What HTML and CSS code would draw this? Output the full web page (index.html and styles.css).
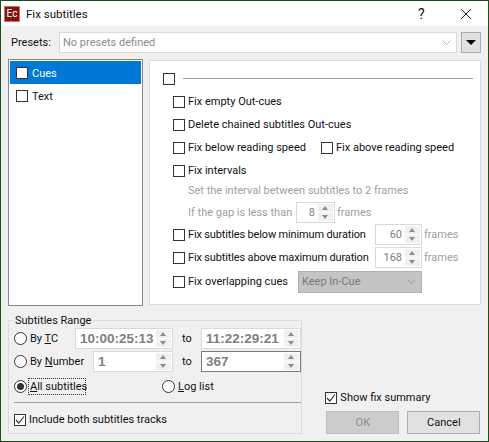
FILE: index.html
```html
<!DOCTYPE html>
<html>

<head>
    <title>Fix subtitles</title>
    <link rel="stylesheet" href="styles.css">
</head>

<body>
    <div class="window">
        <!-- Title bar -->
        <div class="titlebar">
            <div class="appIcon">Ec</div>
            <div class="titleText">Fix subtitles</div>
            <div class="helpBtn">?</div>
            <svg class="closeBtn" width="12" height="12" viewBox="0 0 12 12">
                <path d="M1 1 L11 11 M11 1 L1 11" stroke="#222" stroke-width="1" fill="none"/>
            </svg>
        </div>

        <div class="content">
            <!-- Presets -->
            <div class="presets">
                <label class="presetsLabel">Presets:</label>
                <div class="presetsCombo">
                    <span>No presets defined</span>
                    <svg width="9" height="5" viewBox="0 0 9 5"><path d="M0.5 0.5 L4.5 4.5 L8.5 0.5" stroke="#bbb" fill="none"/></svg>
                </div>
                <div class="presetsMenu"><span class="blackArrow"></span></div>
            </div>

            <div class="main">
                <div class="sideList">
                    <div class="sideItem selected"><span class="check"></span><span class="sideText">Cues</span></div>
                    <div class="sideItem"><span class="check"></span><span class="sideText">Text</span></div>
                </div>

                <div class="panel">
                    <div class="panelHead">
                        <span class="check"></span>
                        <div class="headLine"></div>
                    </div>
                    <div class="row"><span class="check"></span>Fix empty Out-cues</div>
                    <div class="row"><span class="check"></span>Delete chained subtitles Out-cues</div>
                    <div class="row">
                        <span class="check"></span><span class="speedLabel">Fix below reading speed</span>
                        <span class="check"></span><span>Fix above reading speed</span>
                    </div>
                    <div class="row"><span class="check"></span>Fix intervals</div>
                    <div class="row note">Set the interval between subtitles to 2 frames</div>
                    <div class="row note gapRow">
                        <span class="gapLabel">If the gap is less than</span>
                        <div class="spin smallSpin"><span class="spinValue">8</span><div class="arrows"><i class="up"></i><i class="down"></i></div></div>
                        <span>frames</span>
                    </div>
                    <div class="row">
                        <span class="check"></span><span class="durLabel">Fix subtitles below minimum duration</span>
                        <div class="spin durSpin"><span class="spinValue">60</span><div class="arrows"><i class="up"></i><i class="down"></i></div></div>
                        <span class="unit">frames</span>
                    </div>
                    <div class="row">
                        <span class="check"></span><span class="durLabel">Fix subtitles above maximum duration</span>
                        <div class="spin durSpin"><span class="spinValue">168</span><div class="arrows"><i class="up"></i><i class="down"></i></div></div>
                        <span class="unit">frames</span>
                    </div>
                    <div class="row overlapRow">
                        <span class="check"></span><span class="overlapLabel">Fix overlapping cues</span>
                        <div class="keepCombo">
                            <span>Keep In-Cue</span>
                            <svg width="9" height="5" viewBox="0 0 9 5"><path d="M0.5 0.5 L4.5 4.5 L8.5 0.5" stroke="#999" fill="none"/></svg>
                        </div>
                    </div>
                </div>
            </div>

            <div class="bottom">
                <fieldset class="range">
                    <legend>Subtitles Range</legend>
                    <div class="rangeRow">
                        <span class="radio"></span><span class="tcLabel">By <u>T</u>C</span>
                        <div class="spin fromSpin"><span class="spinBold">10:00:25:13</span><div class="arrows"><i class="up"></i><i class="down"></i></div></div>
                        <span class="toLabel">to</span>
                        <div class="spin tcSpin"><span class="spinBold">11:22:29:21</span><div class="arrows"><i class="up"></i><i class="down"></i></div></div>
                    </div>
                    <div class="rangeRow">
                        <span class="radio"></span><span class="numLabel">By <u>N</u>umber</span>
                        <div class="spin numSpin"><span class="spinBold">1</span><div class="arrows"><i class="up"></i><i class="down"></i></div></div>
                        <span class="toLabel">to</span>
                        <div class="spin tcSpin focused"><span class="spinBold">367</span><div class="arrows"><i class="up"></i><i class="down"></i></div></div>
                    </div>
                    <div class="rangeRow allRow">
                        <span class="radio on"></span><span class="allLabel"><u>A</u>ll subtitles</span>
                        <span class="radio"></span><span><u>L</u>og list</span>
                    </div>
                    <div class="rangeLine"></div>
                    <div class="rangeRow">
                        <span class="check checked"><svg width="12" height="12" viewBox="0 0 12 12"><path d="M2 6 L4.8 9 L10 2.5" stroke="#333" stroke-width="1.2" fill="none"/></svg></span><span>Include both subtitles tracks</span>
                    </div>
                </fieldset>

                <div class="actions">
                    <div class="summary">
                        <span class="check checked"><svg width="12" height="12" viewBox="0 0 12 12"><path d="M2 6 L4.8 9 L10 2.5" stroke="#333" stroke-width="1.2" fill="none"/></svg></span><span>Show fix summary</span>
                    </div>
                    <div class="buttons">
                        <div class="btn disabled">OK</div>
                        <div class="btn">Cancel</div>
                    </div>
                </div>
            </div>
        </div>
    </div>
</body>

</html>
```

FILE: styles.css
```css
* {
    box-sizing: border-box;
}

html,
body {
    margin: 0;
    padding: 0;
}

body {
    font-family: 'Roboto', 'Noto Sans', sans-serif;
    font-size: 11px;
    color: #111;
    width: 489px;
    height: 442px;
    overflow: hidden;
}

.window {
    width: 489px;
    height: 442px;
    border: 1px solid #1b4d1b;
    background-color: #f0f0f0;
    display: flex;
    flex-direction: column;
}

/* Title bar */
.titlebar {
    height: 25px;
    background-color: #fff;
    display: flex;
    align-items: center;
    padding-left: 3px;
    flex-shrink: 0;
}

.appIcon {
    width: 16px;
    height: 16px;
    background-color: #7a1610;
    border: 1px solid #e0685c;
    color: #fff;
    font-size: 10px;
    line-height: 14px;
    text-align: center;
}

.titleText {
    margin-left: 6px;
    font-size: 11.5px;
    flex-grow: 1;
}

.helpBtn {
    font-size: 14px;
    width: 6px;
    margin-right: 36px;
}

.closeBtn {
    margin-right: 16px;
}

.content {
    flex-grow: 1;
    padding: 6px 7px 7px;
    display: flex;
    flex-direction: column;
}

/* Presets */
.presets {
    height: 21px;
    display: flex;
    align-items: center;
}

.presetsLabel {
    margin-left: 3px;
    width: 48px;
}

.presetsCombo {
    width: 398px;
    height: 21px;
    background-color: #fff;
    border: 1px solid #d9d9d9;
    color: #8c8c8c;
    display: flex;
    align-items: center;
    justify-content: space-between;
    padding: 0 5px 0 3px;
}

.presetsMenu {
    width: 20px;
    height: 21px;
    margin-left: 4px;
    background-color: #e1e1e1;
    border: 1px solid #adadad;
    display: flex;
    align-items: center;
    justify-content: center;
}

.blackArrow {
    border-left: 5px solid transparent;
    border-right: 5px solid transparent;
    border-top: 5px solid #000;
}

.main {
    margin-top: 6px;
    display: flex;
    height: 247px;
}

.sideList {
    width: 135px;
    background-color: #fff;
    border: 1px solid #828790;
    padding: 1px;
}

.sideItem {
    height: 23px;
    display: flex;
    align-items: center;
    padding-left: 6px;
}

.sideItem .check {
    margin-right: 4px;
}

.sideText {
    padding-top: 2px;
}

.selected {
    background-color: #0078d7;
    color: #fff;
}

.check {
    width: 12px;
    height: 12px;
    border: 1px solid #333;
    background-color: #fff;
    flex-shrink: 0;
    margin-right: 3px;
    display: inline-block;
}

.checked svg {
    display: block;
    margin: -1px;
}

.panel {
    width: 332px;
    height: 245px;
    margin: 1px 0 0 6px;
    background-color: #fff;
    border: 1px solid #dcdcdc;
    padding: 6px 0 0 23px;
}

.panelHead {
    height: 23px;
    margin-left: -10px;
    display: flex;
    align-items: center;
}

.panelHead .check {
    margin-right: 8px;
}

.headLine {
    width: 290px;
    height: 1px;
    background-color: #a0a0a0;
}

.row {
    height: 23px;
    display: flex;
    align-items: center;
    white-space: nowrap;
}

.note {
    color: #a0a0a0;
    padding-left: 15px;
    height: 21px;
    margin-top: -2px;
}

.gapRow {
    margin-top: 1px;
}

.overlapRow {
    margin-top: 1px;
}

.gapLabel {
    width: 108px;
}

.speedLabel {
    width: 133px;
}

.durLabel {
    width: 187px;
    letter-spacing: -0.15px;
}

.overlapLabel {
    width: 110px;
}

.unit {
    color: #a0a0a0;
    margin-left: 2px;
}

.keepCombo {
    width: 124px;
    height: 22px;
    background-color: #c4c4c4;
    border: 1px solid #b0b0b0;
    color: #7a7a7a;
    display: flex;
    align-items: center;
    justify-content: space-between;
    padding: 0 5px 0 3px;
}

/* Spin boxes */
.spin {
    height: 21px;
    background-color: #fff;
    border: 1px solid #d9d9d9;
    display: flex;
    align-items: center;
    justify-content: space-between;
    padding-right: 1px;
}

.spinValue {
    flex-grow: 1;
    text-align: right;
    padding-right: 3px;
    color: #808080;
}

.spinBold {
    font-family: 'Liberation Sans', sans-serif;
    font-size: 13.5px;
    font-weight: bold;
    color: #808080;
    padding-left: 4px;
}

.arrows {
    width: 15px;
    height: 17px;
    display: flex;
    flex-direction: column;
    gap: 1px;
    flex-shrink: 0;
}

.arrows i {
    flex: 1;
    background-color: #f0f0f0;
    position: relative;
    display: block;
}

.arrows i::after {
    content: '';
    position: absolute;
    left: 4px;
    top: 2px;
    border-left: 3px solid transparent;
    border-right: 3px solid transparent;
}

.arrows .up::after {
    border-bottom: 4px solid #8c8c8c;
}

.arrows .down::after {
    border-top: 4px solid #8c8c8c;
}

.smallSpin {
    width: 39px;
    margin-right: 2px;
}

.durSpin {
    width: 47px;
}

.fromSpin {
    width: 98px;
}

.tcSpin {
    width: 100px;
}

.numSpin {
    width: 80px;
}

.focused {
    border-color: #7a7a7a;
}

/* Subtitles range */
.bottom {
    margin-top: 8px;
    display: flex;
    flex-grow: 1;
}

.range {
    width: 295px;
    margin: 0;
    padding: 0 0 0 5px;
    border: 1px solid #dcdcdc;
    min-width: 0;
}

.range legend {
    padding: 0 1px;
    margin-left: 0;
    line-height: 13px;
}

.rangeRow {
    height: 23px;
    display: flex;
    align-items: center;
    white-space: nowrap;
}

.allRow {
    margin-top: 2px;
}

.radio {
    width: 13px;
    height: 13px;
    border: 1px solid #333;
    border-radius: 50%;
    background-color: #fff;
    margin-right: 3px;
    flex-shrink: 0;
    position: relative;
}

.radio.on::after {
    content: '';
    position: absolute;
    left: 2px;
    top: 2px;
    width: 7px;
    height: 7px;
    border-radius: 50%;
    background-color: #333;
}

.tcLabel {
    width: 45px;
}

.numLabel {
    width: 63px;
}

.toLabel {
    width: 19px;
    margin-left: 9px;
}

.allLabel {
    width: 54px;
    height: 13px;
    line-height: 13px;
    outline: 1px dotted #333;
    outline-offset: 1px;
    margin-right: 78px;
}

.rangeLine {
    width: 287px;
    height: 1px;
    background-color: #a0a0a0;
    margin: 4px 0 5px;
}

.actions {
    margin-left: 23px;
    width: 156px;
    display: flex;
    flex-direction: column;
    justify-content: flex-end;
}

.summary {
    display: flex;
    align-items: center;
    margin-bottom: 7px;
}

.buttons {
    display: flex;
    gap: 8px;
    margin-left: 1px;
}

.btn {
    width: 73px;
    height: 23px;
    background-color: #e1e1e1;
    border: 1px solid #adadad;
    display: flex;
    align-items: center;
    justify-content: center;
}

.disabled {
    background-color: #cccccc;
    border-color: #bfbfbf;
    color: #8c8c8c;
}
```
